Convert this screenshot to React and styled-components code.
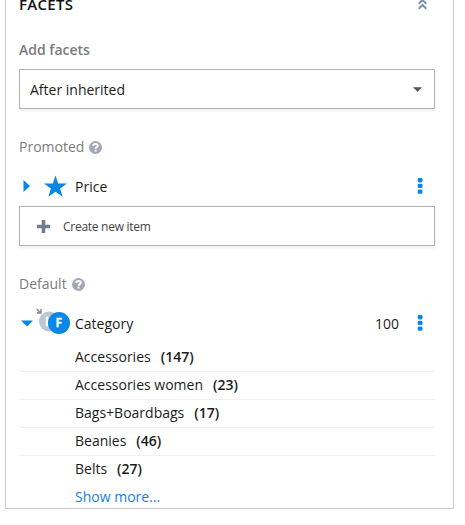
import React from "react";
import styled, { createGlobalStyle } from "styled-components";

const GlobalStyle = createGlobalStyle`
  * { box-sizing: border-box; }
  body { margin: 0; background: #fff; font-family: "Open Sans", "Noto Sans", sans-serif; font-size: 14px; color: #1c1c1c; overflow: hidden; }
`;

const Panel = styled.section`
  width: 449px;
  height: 509px;
  margin-left: 5px;
  padding: 0 18px 0 13px;
  border: 1px solid #cbcbcb;
  border-top: 0;
  overflow: hidden;
  display: flex;
  flex-direction: column;
`;

const Header = styled.header`
  height: 20px;
  flex: none;
  margin-top: -6px;
  display: flex;
  align-items: center;
  justify-content: space-between;
  padding-right: 8px;
`;

const Title = styled.h2`
  margin: 0;
  font-size: 15px;
  line-height: 20px;
  font-weight: 600;
  letter-spacing: 0.3px;
  color: #111;
`;

const Label = styled.div`
  height: 20px;
  line-height: 20px;
  flex: none;
  margin-top: ${(p) => p.$top}px;
  display: flex;
  align-items: center;
  gap: 5px;
  color: #7b7b7b;
  font-weight: ${(p) => (p.$strong ? 600 : 400)};
`;

const Field = styled.div`
  height: 40px;
  flex: none;
  display: flex;
  align-items: center;
  border: 1px solid #b3b3b3;
  box-shadow: 0 2px 2px rgba(80, 90, 120, 0.09);
`;

const Select = styled(Field)`
  margin-top: 9px;
  justify-content: space-between;
  padding: 0 12px 0 10px;
`;

const CreateButton = styled(Field)`
  padding-left: 17px;
  gap: 13px;
  font-size: 12px;
  letter-spacing: -0.27px;
  color: #444;
`;

const FacetRow = styled.div`
  height: 40px;
  flex: none;
  margin-top: ${(p) => p.$top}px;
  display: grid;
  grid-template-columns: 17px 39px 1fr auto 16px;
  align-items: center;
  padding-right: 7px;
`;

const FacetIcon = styled.span`
  display: flex;
  height: 40px;
`;

const Count = styled.span`
  margin-right: 13px;
`;

const Values = styled.ul`
  margin: 1px 0 0;
  padding: 0;
  list-style: none;
`;

const Value = styled.li`
  height: 28px;
  line-height: 25px;
  padding-left: 56px;
  border-bottom: 1px solid #efefef;
  display: flex;
  gap: 10px;
  &:last-child { border-bottom-color: transparent; }
`;

const Amount = styled.span`
  font-weight: 600;
`;

const ShowMore = styled.a`
  padding-left: 56px;
  height: 24px;
  line-height: 25px;
  color: #1a80e0;
`;

const Svg = styled.svg`
  display: block;
  flex: none;
`;

const CollapseIcon = () => (
  <Svg width="9" height="12" viewBox="0 0 9 12" fill="none" stroke="#7890ae" strokeWidth="2">
    <path d="M.7 5.7 4.5 2 8.3 5.7M.7 10.7 4.5 7 8.3 10.7" />
  </Svg>
);

const HelpIcon = () => (
  <Svg width="13" height="13" viewBox="0 0 13 13">
    <circle cx="6.5" cy="6.5" r="6.5" fill="#a2a7b8" />
    <path d="M4.2 5.1C4.2 2.2 8.9 2.4 8.8 4.8C8.7 6.1 6.6 6.2 6.6 7.7" fill="none" stroke="#fff" strokeWidth="2" />
    <path d="M5.6 8.8h2v1.8h-2z" fill="#fff" />
  </Svg>
);

const MenuIcon = () => (
  <Svg width="16" height="18" viewBox="0 0 16 18" fill="#0788e6">
    <rect x="5.7" y="1" width="4.8" height="4.4" rx="1.3" />
    <rect x="5.7" y="6.7" width="4.8" height="4.4" rx="1.3" />
    <rect x="5.7" y="12.4" width="4.8" height="4.4" rx="1.3" />
  </Svg>
);

const Toggle = ({ open }) => (
  <Svg width="16" height="16" viewBox="0 0 16 16" fill="#0788e6">
    <path d={open ? "M2 5.5h12L8 11.5z" : "M4.5 2 11 8 4.5 14z"} />
  </Svg>
);

const StarIcon = () => (
  <Svg width="39" height="40" viewBox="0 0 39 40">
    <path fill="#0788e6" d="m19.5 9.5 2.7 8H31l-6.9 5.1 2.6 8.2-7.2-5-7.2 5 2.6-8.2L8 17.5h8.8z" />
  </Svg>
);

const BadgeText = styled.text`
  font: 700 12px "Open Sans", sans-serif;
  fill: #fff;
  stroke: #fff;
  stroke-width: 0.3px;
`;

const InheritedIcon = () => (
  <Svg width="39" height="40" viewBox="0 0 39 40">
    <circle cx="13" cy="18.5" r="10" fill="#bcc6d4" />
    <BadgeText x="9" y="22.5">I</BadgeText>
    <circle cx="23" cy="20" r="11" fill="#0788e6" />
    <path d="M.7 6 4.2 9.5M5 6v4H1" fill="none" stroke="#7d8595" strokeWidth="1.4" />
    <BadgeText x="19.5" y="24.3">F</BadgeText>
  </Svg>
);

const values = [
  ["Accessories", 147],
  ["Accessories women", 23],
  ["Bags+Boardbags", 17],
  ["Beanies", 46],
  ["Belts", 27],
];

export default function App() {
  return (
    <>
      <GlobalStyle />
      <Panel>
        <Header>
          <Title>FACETS</Title>
          <CollapseIcon />
        </Header>
        <Label $top={26} $strong>Add facets</Label>
        <Select>
          After inherited
          <Svg width="9" height="5" viewBox="0 0 9 5"><path d="M0 .2h9L4.5 4.8z" fill="#555" /></Svg>
        </Select>
        <Label $top={28}>Promoted <HelpIcon /></Label>
        <FacetRow $top={9}>
          <Toggle />
          <FacetIcon><StarIcon /></FacetIcon>
          <span>Price</span>
          <span />
          <MenuIcon />
        </FacetRow>
        <CreateButton>
          <Svg width="13" height="13" viewBox="0 0 13 13"><path d="M4.7 0h3.6v4.7H13v3.6H8.3V13H4.7V8.3H0V4.7h4.7z" fill="#727b90" /></Svg>
          Create new item
        </CreateButton>
        <Label $top={28}>Default <HelpIcon /></Label>
        <FacetRow $top={9}>
          <Toggle open />
          <FacetIcon><InheritedIcon /></FacetIcon>
          <span>Category</span>
          <Count>100</Count>
          <MenuIcon />
        </FacetRow>
        <Values>
          {values.map(([name, count]) => (
            <Value key={name}>
              <span>{name}</span>
              <Amount>({count})</Amount>
            </Value>
          ))}
        </Values>
        <ShowMore>Show more...</ShowMore>
      </Panel>
    </>
  );
}
